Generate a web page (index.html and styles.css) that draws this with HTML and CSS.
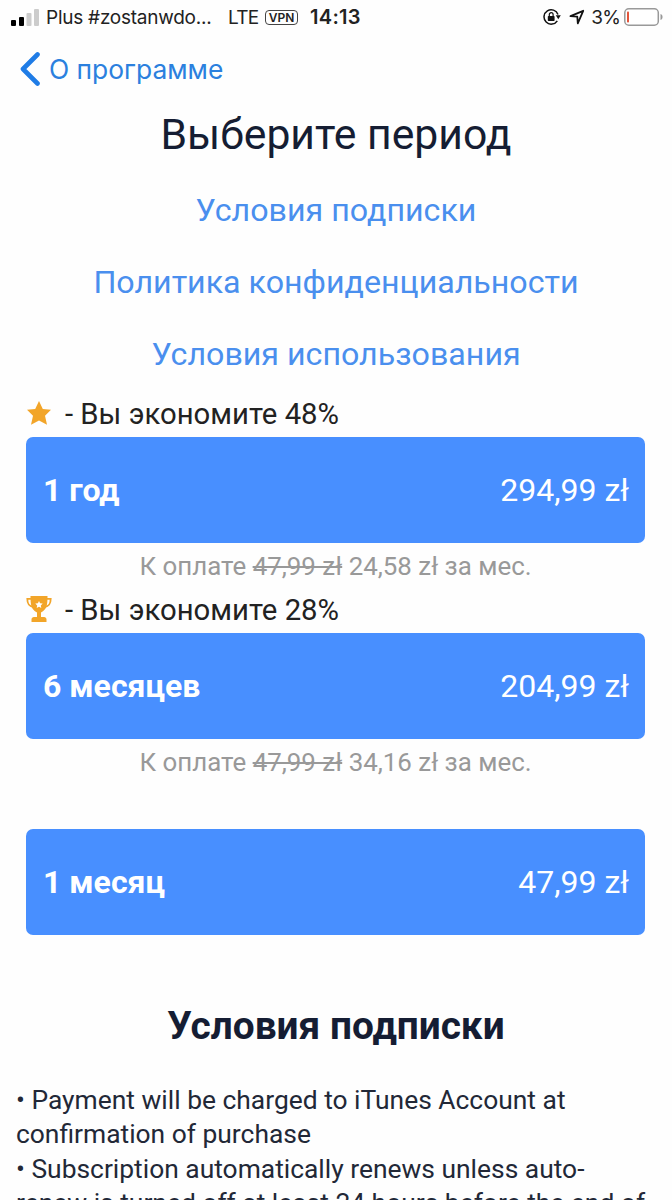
FILE: index.html
```html
<!DOCTYPE html>
<html lang="ru">
<head>
  <meta charset="UTF-8">
  <meta name="viewport" content="width=device-width, initial-scale=1.0">
  <title>Выберите период</title>
  <link rel="stylesheet" href="styles.css">
</head>
<body>
  <!-- Status Bar -->
  <div class="status-bar">
    <svg class="signal" width="28" height="18" viewBox="0 0 28 18">
      <rect x="0" y="12" width="5" height="6" rx="1" fill="#000"/>
      <rect x="8" y="9" width="5" height="9" rx="1" fill="#000"/>
      <rect x="15.500" y="5" width="5" height="13" rx="1" fill="#ccc"/>
      <rect x="23" y="1" width="5" height="17" rx="1" fill="#ccc"/>
    </svg>
    <span class="carrier">Plus #zostanwdo...</span>
    <span class="network">LTE</span>
    <span class="vpn">VPN</span>
    <span class="time">14:13</span>
    <div class="status-right">
      <svg class="lock" width="18" height="18" viewBox="0 0 18 18">
        <path d="M14.300 12.800A7.200 7.200 0 1 1 15 6.500" fill="none" stroke="#111" stroke-width="1.500"/>
        <path d="M12.800 7.300h5l-2.500 3.900z" fill="#111"/>
        <rect x="4.800" y="8" width="6.800" height="5" rx="0.800" fill="#111"/>
        <path d="M6.300 8.500V6.600a1.900 1.900 0 0 1 3.800 0v1.900" fill="none" stroke="#111" stroke-width="1.200"/>
      </svg>
      <svg class="arrow" width="16" height="16" viewBox="0 0 16 16">
        <path d="M1.500 7.200L14.200 1.800L8.800 14.300L8.300 7.700z" fill="none" stroke="#111" stroke-width="1.800" stroke-linejoin="round"/>
      </svg>
      <span class="percent">3%</span>
      <svg class="battery" width="39" height="18" viewBox="0 0 39 18">
        <rect x="0.800" y="0.800" width="33.500" height="16.400" rx="4" fill="#fff" stroke="#999" stroke-width="1.500"/>
        <rect x="3" y="3.500" width="2" height="11" rx="0.800" fill="#e2553b"/>
        <path d="M36.500 6v6c1.600-.6 2-1.700 2-3s-.4-2.400-2-3z" fill="#999"/>
      </svg>
    </div>
  </div>

  <!-- Navigation -->
  <div class="nav">
    <svg class="back" width="20" height="34" viewBox="0 0 20 34">
      <path d="M17.500 2.500L3 17l14.500 14.500" fill="none" stroke="#1f7ce6" stroke-width="4.600" stroke-linecap="round" stroke-linejoin="round"/>
    </svg>
    <a class="nav-link" href="#">О программе</a>
  </div>

  <h1>Выберите период</h1>

  <div class="links">
    <a href="#">Условия подписки</a>
    <a href="#">Политика конфиденциальности</a>
    <a href="#">Условия использования</a>
  </div>

  <!-- Plans -->
  <div class="plans">
    <div class="plan">
      <div class="save">
        <svg width="26" height="26" viewBox="0 0 26 26">
          <path d="M13 1l3.800 7.900 8.200.8-6 6 2 9L13 20.500l-8 4.200 2-9-6-6 8.200-.8z" fill="#f2a529"/>
        </svg>
        <span>- Вы экономите 48%</span>
      </div>
      <button class="plan-button"><b>1 год</b><span>294,99 zł</span></button>
      <p class="note">К оплате <s>47,99 zł</s> 24,58 zł за мес.</p>
    </div>

    <div class="plan">
      <div class="save">
        <svg width="26" height="26" viewBox="0 0 26 26">
          <path d="M5.500 2.800H1.300c0 5.200 1.500 7.400 6 8.200M20.500 2.800h4.200c0 5.200-1.500 7.400-6 8.200" fill="none" stroke="#f2a529" stroke-width="1.800"/>
          <path d="M4.500 0h17c0 8.500-.5 13.500-6.500 16.500V21h3c1.500 0 2.500 1 2.500 2.500V26h-15v-2.500C5.500 22 6.500 21 8 21h3v-4.500C5 13.500 4.500 8.500 4.500 0z" fill="#f2a529"/>
          <path d="M13 5l1.100 2.300 2.600.3-1.900 1.800.5 2.600-2.300-1.300-2.300 1.300.5-2.600-1.900-1.800 2.600-.3z" fill="#fff"/>
        </svg>
        <span>- Вы экономите 28%</span>
      </div>
      <button class="plan-button"><b>6 месяцев</b><span>204,99 zł</span></button>
      <p class="note">К оплате <s>47,99 zł</s> 34,16 zł за мес.</p>
    </div>

    <div class="plan">
      <div class="save"></div>
      <button class="plan-button"><b>1 месяц</b><span>47,99 zł</span></button>
    </div>
  </div>

  <!-- Subscription Terms -->
  <h2>Условия подписки</h2>
  <div class="terms">
    <p>• Payment will be charged to iTunes Account at<br>confirmation of purchase</p>
    <p>• Subscription automatically renews unless auto-<br>renew is turned off at least 24 hours before the end of</p>
  </div>
</body>
</html>
```
FILE: styles.css
```css
* {
  box-sizing: border-box;
}
body {
  font-family: Roboto, sans-serif;
  margin: 0;
  background: #fefefe;
  color: #222;
  height: 1200px;
  overflow: hidden;
}
a {
  text-decoration: none;
}
p {
  margin: 0;
}
svg {
  display: block;
  flex-shrink: 0;
}

/* Status Bar */
.status-bar {
  display: flex;
  align-items: center;
  height: 34px;
  padding: 0 9px 0 11px;
  font-family: Inter, sans-serif;
  font-size: 19px;
  color: #222;
  white-space: nowrap;
}
.signal {
  margin-right: 7px;
}
.carrier {
  width: 182px;
  letter-spacing: -0.25px;
}
.network {
  width: 37px;
  letter-spacing: -0.7px;
}
.vpn {
  width: 33px;
  height: 15px;
  border: 1.5px solid #444;
  border-radius: 4px;
  font-size: 12px;
  font-weight: 600;
  line-height: 13px;
  text-align: center;
}
.time {
  margin-left: 12px;
  font-size: 20px;
  font-weight: 600;
  letter-spacing: 0.3px;
}
.status-right {
  display: flex;
  align-items: center;
  margin-left: auto;
}
.arrow {
  margin-left: 8px;
}
.percent {
  margin: 0 4px 0 6px;
  letter-spacing: -0.8px;
}

/* Navigation */
.nav {
  display: flex;
  align-items: center;
  height: 69px;
  padding-left: 20px;
}
.nav-link {
  margin-left: 9px;
  font-family: Inter, sans-serif;
  font-size: 26.4px;
  color: #2b80de;
}

h1 {
  margin: 0;
  height: 62px;
  font-size: 42.7px;
  font-weight: 400;
  line-height: 62px;
  text-align: center;
  color: #151d33;
}
.links {
  display: flex;
  flex-direction: column;
  align-items: center;
  padding-top: 9px;
  height: 223px;
}
.links a {
  font-size: 32.2px;
  line-height: 72px;
  color: #4a8fee;
}

/* Plans */
.plans {
  padding: 0 27px 0 26px;
}
.plan {
  height: 196px;
}
.save {
  display: flex;
  align-items: center;
  gap: 13px;
  height: 49px;
  font-size: 29.3px;
  color: #222;
}
.save span {
  padding-top: 3px;
}
.plan-button {
  display: flex;
  align-items: center;
  justify-content: space-between;
  width: 100%;
  height: 106px;
  padding: 0 16px 0 17px;
  border: none;
  border-radius: 7px;
  background: #488fff;
  color: #fff;
  font-family: Roboto, sans-serif;
  font-size: 32px;
}
.note {
  font-size: 25.9px;
  line-height: 46px;
  text-align: center;
  color: #999;
}

/* Subscription Terms */
h2 {
  margin: 26px 0 33px;
  font-size: 38.8px;
  line-height: 48px;
  text-align: center;
  color: #151d33;
}
.terms {
  padding: 0 16px;
  font-size: 26.4px;
  line-height: 34.3px;
  color: #222837;
  white-space: nowrap;
}
```
